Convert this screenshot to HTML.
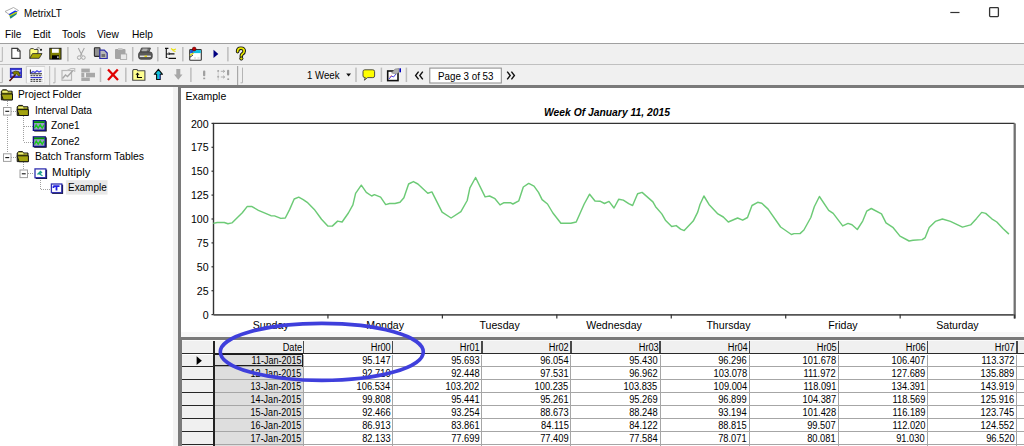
<!DOCTYPE html><html><head><meta charset="utf-8"><style>
html,body{margin:0;padding:0;width:1024px;height:446px;overflow:hidden;background:#fff;position:relative;font-family:"Liberation Sans",sans-serif}
.t{position:absolute;white-space:nowrap;font-family:"Liberation Sans",sans-serif}
svg{position:absolute;overflow:visible}
</style></head><body>
<div style="position:absolute;left:0px;top:0px;width:1024px;height:43px;background:#fff;"></div>
<div class="t" style="left:23.5px;top:7.57px;font-size:11.5px;line-height:11.5px;font-weight:normal;font-style:normal;color:#000;transform:scaleX(0.86);transform-origin:left;">MetrixLT</div>
<div class="t" style="left:5px;top:29.09px;font-size:11px;line-height:11px;font-weight:normal;font-style:normal;color:#000;transform:scaleX(0.92);transform-origin:left;">File</div>
<div class="t" style="left:32.5px;top:29.09px;font-size:11px;line-height:11px;font-weight:normal;font-style:normal;color:#000;transform:scaleX(0.92);transform-origin:left;">Edit</div>
<div class="t" style="left:62px;top:29.09px;font-size:11px;line-height:11px;font-weight:normal;font-style:normal;color:#000;transform:scaleX(0.92);transform-origin:left;">Tools</div>
<div class="t" style="left:97px;top:29.09px;font-size:11px;line-height:11px;font-weight:normal;font-style:normal;color:#000;transform:scaleX(0.92);transform-origin:left;">View</div>
<div class="t" style="left:132px;top:29.09px;font-size:11px;line-height:11px;font-weight:normal;font-style:normal;color:#000;transform:scaleX(0.92);transform-origin:left;">Help</div>
<div style="position:absolute;left:0px;top:43px;width:1024px;height:1px;background:#a0a0a0;"></div>
<div style="position:absolute;left:0px;top:44px;width:1024px;height:20px;background:#f0f0f0;"></div>
<div style="position:absolute;left:0px;top:64px;width:1024px;height:1px;background:#c0c0c0;"></div>
<div style="position:absolute;left:0px;top:65px;width:1024px;height:21px;background:#f0f0f0;"></div>
<div style="position:absolute;left:0px;top:85px;width:1024px;height:2px;background:#7a7a7a;"></div>
<div style="position:absolute;left:0px;top:87px;width:173px;height:359px;background:#fff;"></div>
<div style="position:absolute;left:173px;top:87px;width:5px;height:359px;background:#f3f3f3;"></div>
<div style="position:absolute;left:178px;top:85px;width:846px;height:3px;background:#7a7a7a;"></div>
<div style="position:absolute;left:178px;top:85px;width:3px;height:252px;background:#7a7a7a;"></div>
<div style="position:absolute;left:181px;top:88px;width:843px;height:244px;background:#fff;"></div>
<div style="position:absolute;left:181px;top:332px;width:843px;height:5px;background:#f8f8f8;"></div>
<svg style="left:0;top:0" width="1024" height="446" viewBox="0 0 1024 446"><rect x="67.15" y="47" width="1.5" height="14.4" fill="#bdbdbd"/><rect x="131.95" y="47" width="1.5" height="14.4" fill="#bdbdbd"/><rect x="157.05" y="47" width="1.5" height="14.4" fill="#bdbdbd"/><rect x="182.05" y="47" width="1.5" height="14.4" fill="#bdbdbd"/><rect x="227.15" y="47" width="1.5" height="14.4" fill="#bdbdbd"/><rect x="99.75" y="67.6" width="1.5" height="14.4" fill="#bdbdbd"/><rect x="125.05" y="67.6" width="1.5" height="14.4" fill="#bdbdbd"/><rect x="190.15" y="67.6" width="1.5" height="14.4" fill="#bdbdbd"/><rect x="355.25" y="67.6" width="1.5" height="14.4" fill="#bdbdbd"/><rect x="380.65" y="67.6" width="1.5" height="14.4" fill="#bdbdbd"/><rect x="405.65" y="67.6" width="1.5" height="14.4" fill="#bdbdbd"/><rect x="49" y="66" width="1.2" height="19" fill="#c4c4c4"/><rect x="237" y="66" width="1.2" height="19" fill="#a8a8a8"/><path d="M0 61.4 H2.3 V47" fill="none" stroke="#b4b4b4" stroke-width="1"/><path d="M0 82.6 H2.3 V67.6" fill="none" stroke="#b4b4b4" stroke-width="1"/><path d="M53 82.8 H55 V67.6" fill="none" stroke="#b4b4b4" stroke-width="1"/><path d="M240.5 82.8 H242.5 V67.6" fill="none" stroke="#b4b4b4" stroke-width="1"/><path d="M11.8 48.4 H17.6 L20.1 50.9 V58.4 H11.8 Z" fill="#fff" stroke="#3a3a3a" stroke-width="1.1"/><path d="M17.4 48.4 V51.1 H20.1" fill="none" stroke="#3a3a3a" stroke-width="1"/><path d="M29.8 49.5 L31 48.6 L33.4 48.6 L34.2 49.5 L38 49.5 L38 53 L29.8 58.3 Z" fill="#ffff80" stroke="#303030" stroke-width="0.9"/><path d="M29.8 58.3 L32.5 53.6 L42 53.6 L39.2 58.3 Z" fill="#a8a800" stroke="#303030" stroke-width="0.9"/><circle cx="41" cy="49.8" r="1.1" fill="#202020"/><path d="M36.5 48.6 Q38 46.8 39.8 48.2" fill="none" stroke="#606060" stroke-width="0.8"/><rect x="49.8" y="48.3" width="11.2" height="10.8" fill="#808000" stroke="#1a1a1a" stroke-width="1"/><rect x="52" y="48.8" width="6.8" height="4" fill="#fff"/><rect x="52" y="55.3" width="7" height="3.8" fill="#000"/><rect x="57.3" y="56.3" width="1.2" height="1.8" fill="#fff"/><path d="M78.3 48 L82.2 55.8 M84.3 48 L80.4 55.8" stroke="#a8a8a8" stroke-width="1.1" fill="none"/><circle cx="79.2" cy="57.6" r="1.8" fill="none" stroke="#a8a8a8" stroke-width="1"/><circle cx="83.4" cy="57.6" r="1.8" fill="none" stroke="#a8a8a8" stroke-width="1"/><rect x="94.4" y="47.8" width="5.6" height="8.6" fill="#909090" stroke="#2a2a2a" stroke-width="1.1" rx="0.6"/><path d="M99.8 50.2 H104.3 L107.2 53.1 V58.5 H99.8 Z" fill="#b8b8b8" stroke="#2b2ba8" stroke-width="1.2"/><rect x="101.5" y="54" width="3.6" height="3" fill="#707070"/><rect x="115" y="49" width="10.5" height="10" rx="1" fill="#a4a4a4"/><rect x="118" y="48" width="4.5" height="2" fill="#c8c8c8"/><rect x="120.5" y="54" width="6.2" height="5.5" fill="#e8e8e8" stroke="#a4a4a4" stroke-width="0.8"/><path d="M141.5 48 H150.5 L149 52 H140 Z" fill="#707070" stroke="#404040" stroke-width="0.8"/><path d="M142.5 49.2 H147.5 M141.8 50.8 H146.8" stroke="#e0e0e0" stroke-width="0.8"/><rect x="138.6" y="52" width="13.6" height="7.2" rx="2.2" fill="#5a5a5a" stroke="#3a3a3a" stroke-width="0.8"/><rect x="139.8" y="55.6" width="11" height="1.3" fill="#f0f0f0"/><rect x="144.5" y="55.6" width="2.5" height="1.3" fill="#e0d000"/><path d="M165 48.4 H168.4 M166.3 48.4 V57.5 H167.5 M166.3 54 H168" stroke="#111" stroke-width="1.1" fill="none"/><path d="M168.5 53.8 H174.5 M168.5 58.4 H176 M169 52.4 V55" stroke="#111" stroke-width="1.2" fill="none"/><path d="M171 48.5 L173 50 L176 49 M172.5 50.5 L175.5 51.5" stroke="#e8e000" stroke-width="1.1" fill="none"/><rect x="189.7" y="49.6" width="11.6" height="10.6" rx="0.8" fill="#fff" stroke="#303030" stroke-width="1.1"/><rect x="190.2" y="50.1" width="10.6" height="3" fill="#10c0e0"/><rect x="190.2" y="50.1" width="3" height="3" fill="#2050d0"/><circle cx="194.2" cy="49" r="1.9" fill="#c00000" stroke="#400000" stroke-width="0.5"/><path d="M189.8 55.5 L193.5 53" stroke="#d8d800" stroke-width="1.4"/><path d="M190 57.2 L193 55" stroke="#202020" stroke-width="0.9"/><path d="M194 58 H196 M197.5 58 H199.5" stroke="#c0c0c0" stroke-width="0.8"/><path d="M213.5 49.8 L218.3 53.9 L213.5 58 Z" fill="#000080"/><path d="M237.6 51.6 Q237.6 48.2 240.9 48.2 Q244.2 48.2 244.2 51.1 Q244.2 52.9 242.3 54 Q241.3 54.7 241.3 56.2" fill="none" stroke="#101010" stroke-width="3.6" stroke-linecap="round"/><path d="M237.6 51.6 Q237.6 48.2 240.9 48.2 Q244.2 48.2 244.2 51.1 Q244.2 52.9 242.3 54 Q241.3 54.7 241.3 56.2" fill="none" stroke="#e8e800" stroke-width="1.7" stroke-linecap="round"/><circle cx="241.3" cy="58.5" r="1.6" fill="#e8e800" stroke="#101010" stroke-width="1"/><rect x="10.3" y="68.3" width="11.3" height="9.2" fill="#3838e0" stroke="#2020a0" stroke-width="0.8"/><rect x="11.5" y="70.2" width="9" height="1.4" fill="#e0e8ff"/><rect x="11.5" y="74.2" width="9" height="1.4" fill="#e0e8ff"/><path d="M9.5 81 L15.5 74.5" stroke="#501010" stroke-width="1.6"/><path d="M12.5 72.5 Q15 70 18.5 71.5 L20.5 75.5 L18.5 76 L16.5 73.8 L14.5 75.2 Z" fill="#808000" stroke="#303000" stroke-width="0.6"/><rect x="26.3" y="66.3" width="18.5" height="16.8" fill="#f9f9f9" stroke="#dcdcdc" stroke-width="0.6"/><path d="M26.3 83.1 V66.3 H44.8" fill="none" stroke="#c8c8c8" stroke-width="0.8"/><path d="M30.4 69.5 V73.8 H42" stroke="#222" stroke-width="1" fill="none"/><path d="M31 73 L33 71.5 L35 72.5 L37 70.8 L39 72 L41.5 70.8" stroke="#4040e0" stroke-width="1.3" fill="none"/><path d="M30.5 75.7 H42.2" stroke="#303030" stroke-width="1" stroke-dasharray="2 0.8"/><path d="M30.5 77.6 H42.2" stroke="#3030d0" stroke-width="1.1"/><path d="M30.5 79.6 H42.2 M30.5 81.3 H42.2" stroke="#303030" stroke-width="1" stroke-dasharray="2 0.8"/><rect x="62" y="70.5" width="9.5" height="9.8" fill="none" stroke="#b8b8b8" stroke-width="1.2"/><path d="M62.5 78.5 L65.5 75 L67.5 76.5 L73.5 70" stroke="#a8a8a8" stroke-width="1.4" fill="none"/><path d="M67 70.5 L71 68.5 L74.7 68.5 L74.7 72" stroke="#c0c0c0" stroke-width="1.2" fill="none"/><rect x="81.3" y="68.6" width="8.5" height="3.8" fill="#a8a8a8"/><rect x="81.3" y="72.8" width="3" height="4.5" fill="#a8a8a8"/><rect x="86" y="72.8" width="9" height="4.5" fill="#a8a8a8"/><rect x="81.3" y="77.6" width="8.5" height="3.4" fill="#a8a8a8"/><path d="M108 69.5 L118 80 M117.8 69.5 L108 80" stroke="#e00000" stroke-width="2.3"/><path d="M132.7 70.8 L133.5 69.5 L137 69.5 L137.8 70.8 H144.9 V80.2 H132.7 Z" fill="#ffff90" stroke="#4a4a4a" stroke-width="1.1" stroke-linejoin="round"/><path d="M137.5 74.5 V77.5 H142" stroke="#000" stroke-width="1.2" fill="none"/><path d="M135.5 74.8 L137.5 72.5 L139.5 74.8 Z" fill="#000"/><path d="M158.4 69.3 L162.5 74.3 H160.2 V79.5 H156.6 V74.3 H154.3 Z" fill="#10c0d8" stroke="#0a0a0a" stroke-width="1.1" stroke-linejoin="round"/><path d="M159.8 74.5 V79 " stroke="#4060ff" stroke-width="1"/><path d="M176.3 69 H180.3 V74.5 H182.5 L178.3 79.8 L174 74.5 H176.3 Z" fill="#a8a8a8"/><rect x="203" y="70.4" width="2.3" height="5.8" rx="1" fill="#a0a0a0"/><rect x="203.2" y="77.6" width="2" height="1.6" fill="#a0a0a0"/><circle cx="218.2" cy="71" r="1" fill="#a0a0a0"/><circle cx="218.2" cy="76.8" r="1" fill="#a0a0a0"/><path d="M218.2 71 V80.5" stroke="#c0c0c0" stroke-width="0.6"/><path d="M220.8 71.3 H224.5 M223 70 L224.8 71.3 L223 72.6 M220.8 77 H224.5 M223 75.7 L224.8 77 L223 78.3" stroke="#a0a0a0" stroke-width="0.8" fill="none"/><rect x="227" y="69.8" width="2.2" height="5.8" rx="1" fill="#a0a0a0"/><rect x="227.3" y="78.4" width="1.8" height="1.6" fill="#a0a0a0"/><path d="M346.2 73.4 H351 L348.6 76.4 Z" fill="#111"/><path d="M364.8 69.8 H372.8 Q374.6 69.8 374.6 71.6 V76 Q374.6 77.6 372.8 77.6 H367.5 L364.4 80.2 L365.3 77.6 Q363 77.6 363 76 V71.6 Q363 69.8 364.8 69.8 Z" fill="#ffff00" stroke="#3a3a3a" stroke-width="0.9"/><rect x="387.7" y="71" width="10.3" height="9.6" fill="#fff" stroke="#111" stroke-width="1.6"/><path d="M389 79 L391.5 76 L393.5 77 L396 74" stroke="#3030e0" stroke-width="0.9" fill="none"/><path d="M389.5 77 L392 75.5" stroke="#e04040" stroke-width="0.6"/><path d="M391.5 73 L395 69 L399 68.5 L399 72.5 L396 74 Z" fill="#b0b0b0" stroke="#707070" stroke-width="0.5"/><rect x="399.4" y="68.3" width="1.6" height="4" fill="#0000c0"/><path d="M418.6 71.6 L415.6 75.5 L418.6 79.4 M422.8 71.6 L419.8 75.5 L422.8 79.4" fill="none" stroke="#111" stroke-width="1.4"/><path d="M507.2 71.6 L510.2 75.5 L507.2 79.4 M511.4 71.6 L514.4 75.5 L511.4 79.4" fill="none" stroke="#111" stroke-width="1.4"/><rect x="429.8" y="68.1" width="71.5" height="14.9" fill="#fff" stroke="#8a8a8a" stroke-width="1"/><path d="M950.3 12.5 H959.5" stroke="#333" stroke-width="1.2"/><rect x="989.6" y="7.6" width="8.8" height="9" fill="none" stroke="#333" stroke-width="1.3" rx="0.8"/><path d="M5 11.5 L13.5 7.5 L18.5 10.5 L10 15 Z" fill="#fff" stroke="#999" stroke-width="0.8"/><path d="M8.5 14.3 L15 10.5 Q17 11 17.2 11.8 L10.5 15.3 Q9 15 8.5 14.3 Z" fill="#1030f0"/><path d="M8.8 15.6 L16 11.8 L17.5 12.8 L10.5 16.6 Z" fill="#c8d800"/><path d="M9.5 16.5 L17 12.8 L16.5 14.5 L10.5 18.8 Z" fill="#208878"/><path d="M7.5 101 V153 M11 111.5 H16 M23.5 116 V142 M24 142.5 H33 M24 126.5 H33 M11 157.5 H16 M23.5 162 V169 M28 173.5 H34 M40.5 178 V189 M41 189.5 H51" fill="none" stroke="#a0a0a0" stroke-width="1" stroke-dasharray="1 1"/><path d="M1.3 91.2 L2.8 89.8 L6.6 89.8 L7.8 91.2 L12.100000000000001 91.2 L12.100000000000001 99.8 L1.3 99.8 Z" fill="#707000" stroke="#141414" stroke-width="1"/><path d="M2.3 90.8 H7.3 L7.8999999999999995 92.8 H2.3 Z" fill="#f0f080"/><path d="M8.3 92.2 H11.3" stroke="#c8c860" stroke-width="0.9"/><path d="M1.1 94.0 L12.5 94.0 L12.5 99.9 L3.3 99.9 Z" fill="#a4a410" stroke="#141414" stroke-width="1"/><rect x="3.5" y="107.5" width="7.5" height="7.6" fill="#fff" stroke="#a0a0a0" stroke-width="1"/><path d="M5.3 111.3 H9.2" stroke="#111" stroke-width="1.1"/><path d="M17.2 106.8 L18.7 105.39999999999999 L22.5 105.39999999999999 L23.7 106.8 L28.0 106.8 L28.0 115.39999999999999 L17.2 115.39999999999999 Z" fill="#707000" stroke="#141414" stroke-width="1"/><path d="M18.2 106.39999999999999 H23.2 L23.799999999999997 108.39999999999999 H18.2 Z" fill="#f0f080"/><path d="M24.2 107.8 H27.2" stroke="#c8c860" stroke-width="0.9"/><path d="M17.0 109.6 L28.4 109.6 L28.4 115.5 L19.2 115.5 Z" fill="#a4a410" stroke="#141414" stroke-width="1"/><rect x="34.2" y="121.2" width="12.5" height="10.3" fill="#000"/><rect x="33.400000000000006" y="120.7" width="11.8" height="9.6" fill="#9a9ac8" stroke="#101080" stroke-width="1.4"/><rect x="34.0" y="121.3" width="10.6" height="1.7" fill="#009a00"/><path d="M34.5 128.3 L36.2 124.8 L38.2 128.0 L40.2 124.8 L42.2 128.0 L44.2 124.8" stroke="#18c818" stroke-width="1.3" fill="none"/><rect x="34.2" y="137.39999999999998" width="12.5" height="10.3" fill="#000"/><rect x="33.400000000000006" y="136.89999999999998" width="11.8" height="9.6" fill="#9a9ac8" stroke="#101080" stroke-width="1.4"/><rect x="34.0" y="137.5" width="10.6" height="1.7" fill="#009a00"/><path d="M34.5 144.5 L36.2 141.0 L38.2 144.2 L40.2 141.0 L42.2 144.2 L44.2 141.0" stroke="#18c818" stroke-width="1.3" fill="none"/><rect x="3.5" y="153.8" width="7.5" height="7.6" fill="#fff" stroke="#a0a0a0" stroke-width="1"/><path d="M5.3 157.60000000000002 H9.2" stroke="#111" stroke-width="1.1"/><path d="M17.2 153.0 L18.7 151.6 L22.5 151.6 L23.7 153.0 L28.0 153.0 L28.0 161.6 L17.2 161.6 Z" fill="#707000" stroke="#141414" stroke-width="1"/><path d="M18.2 152.6 H23.2 L23.799999999999997 154.6 H18.2 Z" fill="#f0f080"/><path d="M24.2 154.0 H27.2" stroke="#c8c860" stroke-width="0.9"/><path d="M17.0 155.8 L28.4 155.8 L28.4 161.7 L19.2 161.7 Z" fill="#a4a410" stroke="#141414" stroke-width="1"/><rect x="20.0" y="170.0" width="7.5" height="7.6" fill="#fff" stroke="#a0a0a0" stroke-width="1"/><path d="M21.8 173.8 H25.7" stroke="#111" stroke-width="1.1"/><rect x="35.699999999999996" y="169.60000000000002" width="11.4" height="9.4" fill="#101030"/><rect x="35.0" y="168.9" width="10.8" height="8.8" fill="#fff" stroke="#3030b0" stroke-width="1.3"/><path d="M37.5 174.5 L40.5 171.5 L41.5 172.5 L39.5 174 L42.5 175.8" stroke="#20a090" stroke-width="1.3" fill="none"/><rect x="65.9" y="180.2" width="41.6" height="14.4" fill="#e8e8e8"/><rect x="52.099999999999994" y="184.70000000000002" width="11" height="9.2" fill="#101030"/><rect x="51.4" y="184.0" width="10.4" height="8.6" fill="#fff" stroke="#3030b0" stroke-width="1.3"/><path d="M53.3 186.2 H59.5 M56.5 186.2 V190.5 M53.5 186.2 V188" stroke="#2020e0" stroke-width="1.8" fill="none"/></svg>
<div class="t" style="left:18.4px;top:89.98px;font-size:10.3px;line-height:10.3px;font-weight:normal;font-style:normal;color:#000;transform:scaleX(0.99);transform-origin:left;">Project Folder</div>
<div class="t" style="left:35px;top:105.56px;font-size:10.3px;line-height:10.3px;font-weight:normal;font-style:normal;color:#000;transform:scaleX(0.975);transform-origin:left;">Interval Data</div>
<div class="t" style="left:51px;top:121.14px;font-size:10.3px;line-height:10.3px;font-weight:normal;font-style:normal;color:#000;transform:scaleX(0.985);transform-origin:left;">Zone1</div>
<div class="t" style="left:51px;top:136.72px;font-size:10.3px;line-height:10.3px;font-weight:normal;font-style:normal;color:#000;transform:scaleX(0.985);transform-origin:left;">Zone2</div>
<div class="t" style="left:34.8px;top:152.30px;font-size:10.3px;line-height:10.3px;font-weight:normal;font-style:normal;color:#000;transform:scaleX(1.01);transform-origin:left;">Batch Transform Tables</div>
<div class="t" style="left:51.5px;top:167.88px;font-size:10.3px;line-height:10.3px;font-weight:normal;font-style:normal;color:#000;transform:scaleX(1.1);transform-origin:left;">Multiply</div>
<div class="t" style="left:67.8px;top:183.46px;font-size:10.3px;line-height:10.3px;font-weight:normal;font-style:normal;color:#000;transform:scaleX(0.965);transform-origin:left;">Example</div>
<div class="t" style="left:307.1px;top:70.41px;font-size:10.5px;line-height:10.5px;font-weight:normal;font-style:normal;color:#000;transform:scaleX(0.92);transform-origin:left;">1 Week</div>
<div class="t" style="left:438px;top:72.28px;font-size:10.3px;line-height:10.3px;font-weight:normal;font-style:normal;color:#000;transform:scaleX(0.95);transform-origin:left;">Page 3 of 53</div>
<div class="t" style="left:185.4px;top:91.11px;font-size:10.5px;line-height:10.5px;font-weight:normal;font-style:normal;color:#000;">Example</div>
<div class="t" style="left:544px;top:107.13px;font-size:10.6px;line-height:10.6px;font-weight:bold;font-style:italic;color:#000;transform:scaleX(0.975);transform-origin:left;">Week Of January 11, 2015</div>
<svg style="left:0;top:0" width="1024" height="446" viewBox="0 0 1024 446"><path d="M213.5 314.8 V123.4 H1014.6" fill="none" stroke="#333" stroke-width="1.4"/><path d="M213.5 314.9 H1014.6" fill="none" stroke="#555" stroke-width="1.7"/><path d="M1014.7 123.4 V318.5" stroke="#707070" stroke-width="2.3"/><path d="M211.5 123.40 H213.5" stroke="#333" stroke-width="1.2"/><path d="M211.5 147.30 H213.5" stroke="#333" stroke-width="1.2"/><path d="M211.5 171.20 H213.5" stroke="#333" stroke-width="1.2"/><path d="M211.5 195.10 H213.5" stroke="#333" stroke-width="1.2"/><path d="M211.5 219.00 H213.5" stroke="#333" stroke-width="1.2"/><path d="M211.5 242.90 H213.5" stroke="#333" stroke-width="1.2"/><path d="M211.5 266.80 H213.5" stroke="#333" stroke-width="1.2"/><path d="M211.5 290.70 H213.5" stroke="#333" stroke-width="1.2"/><path d="M211.5 314.60 H213.5" stroke="#333" stroke-width="1.2"/><path d="M327.94 314.6 V318.5" stroke="#333" stroke-width="1.2"/><path d="M442.39 314.6 V318.5" stroke="#333" stroke-width="1.2"/><path d="M556.83 314.6 V318.5" stroke="#333" stroke-width="1.2"/><path d="M671.27 314.6 V318.5" stroke="#333" stroke-width="1.2"/><path d="M785.71 314.6 V318.5" stroke="#333" stroke-width="1.2"/><path d="M900.16 314.6 V318.5" stroke="#333" stroke-width="1.2"/><path d="M1014.60 314.6 V318.5" stroke="#333" stroke-width="1.2"/><path d="M213.2 223.4 L217.2 222.5 L224.3 222.5 L227.9 223.8 L231.9 222.9 L242.3 212.7 L247.3 206.4 L251.6 206.4 L258.4 210.3 L263.8 212.7 L270.9 215.7 L274.5 215.9 L280.8 218.4 L285.3 218.0 L289.7 209.4 L294.2 199.0 L298.7 197.2 L303.2 199.6 L307.2 202.3 L314.3 209.4 L321.5 219.3 L327.8 226.1 L332.3 226.1 L337.6 221.1 L342.1 222.0 L348.4 213.0 L352.9 204.9 L355.6 193.3 L361.3 185.2 L366.3 192.4 L371.7 196.0 L374.4 194.7 L380.6 197.2 L385.7 204.6 L389.6 203.5 L395.0 203.5 L400.0 202.3 L403.9 197.8 L408.6 184.0 L413.4 181.6 L417.9 184.0 L427.8 193.3 L431.9 191.9 L442.1 212.1 L451.1 218.0 L460.9 211.6 L467.2 200.5 L469.9 187.9 L475.6 177.5 L485.1 196.9 L489.6 196.0 L495.0 198.7 L500.0 204.9 L503.6 202.8 L510.8 202.8 L512.9 204.0 L518.8 200.8 L523.3 187.0 L528.7 183.4 L534.0 186.1 L538.5 192.4 L542.1 199.6 L547.5 204.0 L552.9 213.0 L560.9 223.2 L570.8 223.2 L576.2 222.0 L584.2 204.0 L589.6 194.2 L595.0 201.0 L600.0 201.2 L604.5 203.5 L609.0 201.4 L614.0 208.0 L618.8 199.2 L623.3 200.1 L628.7 203.7 L632.6 205.5 L637.6 193.7 L642.1 192.4 L652.9 201.9 L655.6 206.7 L661.8 213.9 L665.4 220.2 L671.7 226.5 L676.2 225.6 L680.6 229.1 L684.2 230.6 L693.2 221.1 L697.7 212.1 L700.0 204.5 L703.9 196.0 L709.0 204.4 L717.9 213.9 L723.3 217.0 L728.3 222.0 L737.6 218.0 L742.7 220.2 L747.5 217.5 L752.0 205.5 L757.7 202.3 L761.8 203.2 L768.1 209.1 L780.6 227.0 L791.4 234.5 L794.1 233.6 L800.0 233.6 L803.9 230.0 L810.8 217.5 L814.3 206.7 L819.4 196.5 L828.7 210.3 L833.2 213.4 L842.7 225.9 L848.0 223.4 L852.0 224.7 L857.3 229.5 L862.7 221.1 L866.7 211.2 L871.3 208.5 L881.5 213.9 L886.0 222.9 L893.2 227.7 L900.0 236.1 L909.1 241.0 L913.1 240.2 L922.2 239.6 L925.2 237.6 L929.2 227.5 L935.3 221.4 L942.4 219.0 L950.4 221.4 L962.5 227.1 L970.6 224.9 L976.6 218.4 L981.7 212.4 L985.7 213.4 L991.8 218.8 L996.8 222.0 L1002.9 228.5 L1008.9 234.1" fill="none" stroke="#6cca76" stroke-width="1.45" stroke-linejoin="round"/></svg>
<div class="t" style="right:815.4px;top:118.53px;font-size:10.6px;line-height:10.6px;font-weight:normal;font-style:normal;color:#000;">200</div>
<div class="t" style="right:815.4px;top:142.43px;font-size:10.6px;line-height:10.6px;font-weight:normal;font-style:normal;color:#000;">175</div>
<div class="t" style="right:815.4px;top:166.33px;font-size:10.6px;line-height:10.6px;font-weight:normal;font-style:normal;color:#000;">150</div>
<div class="t" style="right:815.4px;top:190.23px;font-size:10.6px;line-height:10.6px;font-weight:normal;font-style:normal;color:#000;">125</div>
<div class="t" style="right:815.4px;top:214.13px;font-size:10.6px;line-height:10.6px;font-weight:normal;font-style:normal;color:#000;">100</div>
<div class="t" style="right:815.4px;top:238.03px;font-size:10.6px;line-height:10.6px;font-weight:normal;font-style:normal;color:#000;">75</div>
<div class="t" style="right:815.4px;top:261.93px;font-size:10.6px;line-height:10.6px;font-weight:normal;font-style:normal;color:#000;">50</div>
<div class="t" style="right:815.4px;top:285.83px;font-size:10.6px;line-height:10.6px;font-weight:normal;font-style:normal;color:#000;">25</div>
<div class="t" style="right:815.4px;top:309.73px;font-size:10.6px;line-height:10.6px;font-weight:normal;font-style:normal;color:#000;">0</div>
<div class="t" style="left:270.7214285714286px;top:320.43px;font-size:10.6px;line-height:10.6px;font-weight:normal;font-style:normal;color:#000;transform:translateX(-50%) scaleX(1.0);">Sunday</div>
<div class="t" style="left:385.1642857142857px;top:320.43px;font-size:10.6px;line-height:10.6px;font-weight:normal;font-style:normal;color:#000;transform:translateX(-50%) scaleX(1.0);">Monday</div>
<div class="t" style="left:499.60714285714283px;top:320.43px;font-size:10.6px;line-height:10.6px;font-weight:normal;font-style:normal;color:#000;transform:translateX(-50%) scaleX(1.0);">Tuesday</div>
<div class="t" style="left:614.05px;top:320.43px;font-size:10.6px;line-height:10.6px;font-weight:normal;font-style:normal;color:#000;transform:translateX(-50%) scaleX(1.0);">Wednesday</div>
<div class="t" style="left:728.4928571428571px;top:320.43px;font-size:10.6px;line-height:10.6px;font-weight:normal;font-style:normal;color:#000;transform:translateX(-50%) scaleX(1.0);">Thursday</div>
<div class="t" style="left:842.9357142857143px;top:320.43px;font-size:10.6px;line-height:10.6px;font-weight:normal;font-style:normal;color:#000;transform:translateX(-50%) scaleX(1.0);">Friday</div>
<div class="t" style="left:957.3785714285715px;top:320.43px;font-size:10.6px;line-height:10.6px;font-weight:normal;font-style:normal;color:#000;transform:translateX(-50%) scaleX(1.0);">Saturday</div>
<div style="position:absolute;left:178px;top:337px;width:846px;height:3px;background:#7a7a7a;"></div>
<div style="position:absolute;left:178px;top:337px;width:4px;height:109px;background:#7a7a7a;"></div>
<div style="position:absolute;left:182px;top:340px;width:842px;height:1px;background:#fafafa;"></div>
<div style="position:absolute;left:182px;top:341px;width:842px;height:12px;background:#f0f0f0;"></div>
<div style="position:absolute;left:182px;top:352.5px;width:842px;height:1.8px;background:#2a2a2a;"></div>
<div style="position:absolute;left:215px;top:355px;width:809px;height:91px;background:#fff;"></div>
<div style="position:absolute;left:215px;top:355px;width:88px;height:91px;background:#dedede;"></div>
<div style="position:absolute;left:182px;top:355px;width:32px;height:91px;background:#f0f0f0;"></div>
<div style="position:absolute;left:213.1px;top:341px;width:1.7px;height:105px;background:#222;"></div>
<div style="position:absolute;left:182px;top:366px;width:32px;height:1.3px;background:#262626;"></div>
<div style="position:absolute;left:215px;top:366px;width:809px;height:1px;background:#a6a6a6;"></div>
<div style="position:absolute;left:182px;top:379px;width:32px;height:1.3px;background:#262626;"></div>
<div style="position:absolute;left:215px;top:379px;width:809px;height:1px;background:#a6a6a6;"></div>
<div style="position:absolute;left:182px;top:392px;width:32px;height:1.3px;background:#262626;"></div>
<div style="position:absolute;left:215px;top:392px;width:809px;height:1px;background:#a6a6a6;"></div>
<div style="position:absolute;left:182px;top:405px;width:32px;height:1.3px;background:#262626;"></div>
<div style="position:absolute;left:215px;top:405px;width:809px;height:1px;background:#a6a6a6;"></div>
<div style="position:absolute;left:182px;top:418px;width:32px;height:1.3px;background:#262626;"></div>
<div style="position:absolute;left:215px;top:418px;width:809px;height:1px;background:#a6a6a6;"></div>
<div style="position:absolute;left:182px;top:431px;width:32px;height:1.3px;background:#262626;"></div>
<div style="position:absolute;left:215px;top:431px;width:809px;height:1px;background:#a6a6a6;"></div>
<div style="position:absolute;left:182px;top:444px;width:32px;height:1.3px;background:#262626;"></div>
<div style="position:absolute;left:215px;top:444px;width:809px;height:1px;background:#a6a6a6;"></div>
<div style="position:absolute;left:302.8px;top:341px;width:1.5px;height:12px;background:#4a4a4a;"></div>
<div style="position:absolute;left:303.0px;top:355px;width:1px;height:91px;background:#a6a6a6;"></div>
<div style="position:absolute;left:391.95px;top:341px;width:1.5px;height:12px;background:#4a4a4a;"></div>
<div style="position:absolute;left:392.15px;top:355px;width:1px;height:91px;background:#a6a6a6;"></div>
<div style="position:absolute;left:481.1px;top:341px;width:1.5px;height:12px;background:#4a4a4a;"></div>
<div style="position:absolute;left:481.3px;top:355px;width:1px;height:91px;background:#a6a6a6;"></div>
<div style="position:absolute;left:570.25px;top:341px;width:1.5px;height:12px;background:#4a4a4a;"></div>
<div style="position:absolute;left:570.45px;top:355px;width:1px;height:91px;background:#a6a6a6;"></div>
<div style="position:absolute;left:659.4px;top:341px;width:1.5px;height:12px;background:#4a4a4a;"></div>
<div style="position:absolute;left:659.6px;top:355px;width:1px;height:91px;background:#a6a6a6;"></div>
<div style="position:absolute;left:748.55px;top:341px;width:1.5px;height:12px;background:#4a4a4a;"></div>
<div style="position:absolute;left:748.75px;top:355px;width:1px;height:91px;background:#a6a6a6;"></div>
<div style="position:absolute;left:837.7px;top:341px;width:1.5px;height:12px;background:#4a4a4a;"></div>
<div style="position:absolute;left:837.9000000000001px;top:355px;width:1px;height:91px;background:#a6a6a6;"></div>
<div style="position:absolute;left:926.85px;top:341px;width:1.5px;height:12px;background:#4a4a4a;"></div>
<div style="position:absolute;left:927.0500000000001px;top:355px;width:1px;height:91px;background:#a6a6a6;"></div>
<div style="position:absolute;left:1016.0px;top:341px;width:1.5px;height:12px;background:#4a4a4a;"></div>
<div style="position:absolute;left:1016.2px;top:355px;width:1px;height:91px;background:#a6a6a6;"></div>
<div style="position:absolute;left:215px;top:353px;width:88px;height:2px;background:#1e1e1e;"></div>
<div style="position:absolute;left:301.6px;top:353px;width:1.4px;height:13.5px;background:#1e1e1e;"></div>
<div style="position:absolute;left:215px;top:365px;width:88px;height:1.4px;background:#1e1e1e;"></div>
<svg style="left:0;top:0" width="1024" height="446"><path d="M196.6 356.3 L201.9 360.7 L196.6 365.1 Z" fill="#000"/></svg>
<div class="t" style="right:722.3px;top:342.84px;font-size:10px;line-height:10px;font-weight:normal;font-style:normal;color:#000;transform:scaleX(0.92);transform-origin:right;">Date</div>
<div class="t" style="right:633.1500000000001px;top:342.84px;font-size:10px;line-height:10px;font-weight:normal;font-style:normal;color:#000;transform:scaleX(0.92);transform-origin:right;">Hr00</div>
<div class="t" style="right:544.0px;top:342.84px;font-size:10px;line-height:10px;font-weight:normal;font-style:normal;color:#000;transform:scaleX(0.92);transform-origin:right;">Hr01</div>
<div class="t" style="right:454.8499999999999px;top:342.84px;font-size:10px;line-height:10px;font-weight:normal;font-style:normal;color:#000;transform:scaleX(0.92);transform-origin:right;">Hr02</div>
<div class="t" style="right:365.69999999999993px;top:342.84px;font-size:10px;line-height:10px;font-weight:normal;font-style:normal;color:#000;transform:scaleX(0.92);transform-origin:right;">Hr03</div>
<div class="t" style="right:276.54999999999995px;top:342.84px;font-size:10px;line-height:10px;font-weight:normal;font-style:normal;color:#000;transform:scaleX(0.92);transform-origin:right;">Hr04</div>
<div class="t" style="right:187.39999999999986px;top:342.84px;font-size:10px;line-height:10px;font-weight:normal;font-style:normal;color:#000;transform:scaleX(0.92);transform-origin:right;">Hr05</div>
<div class="t" style="right:98.24999999999989px;top:342.84px;font-size:10px;line-height:10px;font-weight:normal;font-style:normal;color:#000;transform:scaleX(0.92);transform-origin:right;">Hr06</div>
<div class="t" style="right:9.099999999999909px;top:342.84px;font-size:10px;line-height:10px;font-weight:normal;font-style:normal;color:#000;transform:scaleX(0.92);transform-origin:right;">Hr07</div>
<div class="t" style="right:723.0px;top:355.64px;font-size:10px;line-height:10px;font-weight:normal;font-style:normal;color:#000;transform:scaleX(0.9);transform-origin:right;">11-Jan-2015</div>
<div class="t" style="right:633.85px;top:355.64px;font-size:10px;line-height:10px;font-weight:normal;font-style:normal;color:#000;transform:scaleX(0.93);transform-origin:right;">95.147</div>
<div class="t" style="right:544.7px;top:355.64px;font-size:10px;line-height:10px;font-weight:normal;font-style:normal;color:#000;transform:scaleX(0.93);transform-origin:right;">95.693</div>
<div class="t" style="right:455.54999999999995px;top:355.64px;font-size:10px;line-height:10px;font-weight:normal;font-style:normal;color:#000;transform:scaleX(0.93);transform-origin:right;">96.054</div>
<div class="t" style="right:366.4px;top:355.64px;font-size:10px;line-height:10px;font-weight:normal;font-style:normal;color:#000;transform:scaleX(0.93);transform-origin:right;">95.430</div>
<div class="t" style="right:277.25px;top:355.64px;font-size:10px;line-height:10px;font-weight:normal;font-style:normal;color:#000;transform:scaleX(0.93);transform-origin:right;">96.296</div>
<div class="t" style="right:188.0999999999999px;top:355.64px;font-size:10px;line-height:10px;font-weight:normal;font-style:normal;color:#000;transform:scaleX(0.93);transform-origin:right;">101.678</div>
<div class="t" style="right:98.94999999999993px;top:355.64px;font-size:10px;line-height:10px;font-weight:normal;font-style:normal;color:#000;transform:scaleX(0.93);transform-origin:right;">106.407</div>
<div class="t" style="right:9.799999999999955px;top:355.64px;font-size:10px;line-height:10px;font-weight:normal;font-style:normal;color:#000;transform:scaleX(0.93);transform-origin:right;">113.372</div>
<div class="t" style="right:723.0px;top:368.64px;font-size:10px;line-height:10px;font-weight:normal;font-style:normal;color:#000;transform:scaleX(0.9);transform-origin:right;">12-Jan-2015</div>
<div class="t" style="right:633.85px;top:368.64px;font-size:10px;line-height:10px;font-weight:normal;font-style:normal;color:#000;transform:scaleX(0.93);transform-origin:right;">92.710</div>
<div class="t" style="right:544.7px;top:368.64px;font-size:10px;line-height:10px;font-weight:normal;font-style:normal;color:#000;transform:scaleX(0.93);transform-origin:right;">92.448</div>
<div class="t" style="right:455.54999999999995px;top:368.64px;font-size:10px;line-height:10px;font-weight:normal;font-style:normal;color:#000;transform:scaleX(0.93);transform-origin:right;">97.531</div>
<div class="t" style="right:366.4px;top:368.64px;font-size:10px;line-height:10px;font-weight:normal;font-style:normal;color:#000;transform:scaleX(0.93);transform-origin:right;">96.962</div>
<div class="t" style="right:277.25px;top:368.64px;font-size:10px;line-height:10px;font-weight:normal;font-style:normal;color:#000;transform:scaleX(0.93);transform-origin:right;">103.078</div>
<div class="t" style="right:188.0999999999999px;top:368.64px;font-size:10px;line-height:10px;font-weight:normal;font-style:normal;color:#000;transform:scaleX(0.93);transform-origin:right;">111.972</div>
<div class="t" style="right:98.94999999999993px;top:368.64px;font-size:10px;line-height:10px;font-weight:normal;font-style:normal;color:#000;transform:scaleX(0.93);transform-origin:right;">127.689</div>
<div class="t" style="right:9.799999999999955px;top:368.64px;font-size:10px;line-height:10px;font-weight:normal;font-style:normal;color:#000;transform:scaleX(0.93);transform-origin:right;">135.889</div>
<div class="t" style="right:723.0px;top:381.64px;font-size:10px;line-height:10px;font-weight:normal;font-style:normal;color:#000;transform:scaleX(0.9);transform-origin:right;">13-Jan-2015</div>
<div class="t" style="right:633.85px;top:381.64px;font-size:10px;line-height:10px;font-weight:normal;font-style:normal;color:#000;transform:scaleX(0.93);transform-origin:right;">106.534</div>
<div class="t" style="right:544.7px;top:381.64px;font-size:10px;line-height:10px;font-weight:normal;font-style:normal;color:#000;transform:scaleX(0.93);transform-origin:right;">103.202</div>
<div class="t" style="right:455.54999999999995px;top:381.64px;font-size:10px;line-height:10px;font-weight:normal;font-style:normal;color:#000;transform:scaleX(0.93);transform-origin:right;">100.235</div>
<div class="t" style="right:366.4px;top:381.64px;font-size:10px;line-height:10px;font-weight:normal;font-style:normal;color:#000;transform:scaleX(0.93);transform-origin:right;">103.835</div>
<div class="t" style="right:277.25px;top:381.64px;font-size:10px;line-height:10px;font-weight:normal;font-style:normal;color:#000;transform:scaleX(0.93);transform-origin:right;">109.004</div>
<div class="t" style="right:188.0999999999999px;top:381.64px;font-size:10px;line-height:10px;font-weight:normal;font-style:normal;color:#000;transform:scaleX(0.93);transform-origin:right;">118.091</div>
<div class="t" style="right:98.94999999999993px;top:381.64px;font-size:10px;line-height:10px;font-weight:normal;font-style:normal;color:#000;transform:scaleX(0.93);transform-origin:right;">134.391</div>
<div class="t" style="right:9.799999999999955px;top:381.64px;font-size:10px;line-height:10px;font-weight:normal;font-style:normal;color:#000;transform:scaleX(0.93);transform-origin:right;">143.919</div>
<div class="t" style="right:723.0px;top:394.64px;font-size:10px;line-height:10px;font-weight:normal;font-style:normal;color:#000;transform:scaleX(0.9);transform-origin:right;">14-Jan-2015</div>
<div class="t" style="right:633.85px;top:394.64px;font-size:10px;line-height:10px;font-weight:normal;font-style:normal;color:#000;transform:scaleX(0.93);transform-origin:right;">99.808</div>
<div class="t" style="right:544.7px;top:394.64px;font-size:10px;line-height:10px;font-weight:normal;font-style:normal;color:#000;transform:scaleX(0.93);transform-origin:right;">95.441</div>
<div class="t" style="right:455.54999999999995px;top:394.64px;font-size:10px;line-height:10px;font-weight:normal;font-style:normal;color:#000;transform:scaleX(0.93);transform-origin:right;">95.261</div>
<div class="t" style="right:366.4px;top:394.64px;font-size:10px;line-height:10px;font-weight:normal;font-style:normal;color:#000;transform:scaleX(0.93);transform-origin:right;">95.269</div>
<div class="t" style="right:277.25px;top:394.64px;font-size:10px;line-height:10px;font-weight:normal;font-style:normal;color:#000;transform:scaleX(0.93);transform-origin:right;">96.899</div>
<div class="t" style="right:188.0999999999999px;top:394.64px;font-size:10px;line-height:10px;font-weight:normal;font-style:normal;color:#000;transform:scaleX(0.93);transform-origin:right;">104.387</div>
<div class="t" style="right:98.94999999999993px;top:394.64px;font-size:10px;line-height:10px;font-weight:normal;font-style:normal;color:#000;transform:scaleX(0.93);transform-origin:right;">118.569</div>
<div class="t" style="right:9.799999999999955px;top:394.64px;font-size:10px;line-height:10px;font-weight:normal;font-style:normal;color:#000;transform:scaleX(0.93);transform-origin:right;">125.916</div>
<div class="t" style="right:723.0px;top:407.64px;font-size:10px;line-height:10px;font-weight:normal;font-style:normal;color:#000;transform:scaleX(0.9);transform-origin:right;">15-Jan-2015</div>
<div class="t" style="right:633.85px;top:407.64px;font-size:10px;line-height:10px;font-weight:normal;font-style:normal;color:#000;transform:scaleX(0.93);transform-origin:right;">92.466</div>
<div class="t" style="right:544.7px;top:407.64px;font-size:10px;line-height:10px;font-weight:normal;font-style:normal;color:#000;transform:scaleX(0.93);transform-origin:right;">93.254</div>
<div class="t" style="right:455.54999999999995px;top:407.64px;font-size:10px;line-height:10px;font-weight:normal;font-style:normal;color:#000;transform:scaleX(0.93);transform-origin:right;">88.673</div>
<div class="t" style="right:366.4px;top:407.64px;font-size:10px;line-height:10px;font-weight:normal;font-style:normal;color:#000;transform:scaleX(0.93);transform-origin:right;">88.248</div>
<div class="t" style="right:277.25px;top:407.64px;font-size:10px;line-height:10px;font-weight:normal;font-style:normal;color:#000;transform:scaleX(0.93);transform-origin:right;">93.194</div>
<div class="t" style="right:188.0999999999999px;top:407.64px;font-size:10px;line-height:10px;font-weight:normal;font-style:normal;color:#000;transform:scaleX(0.93);transform-origin:right;">101.428</div>
<div class="t" style="right:98.94999999999993px;top:407.64px;font-size:10px;line-height:10px;font-weight:normal;font-style:normal;color:#000;transform:scaleX(0.93);transform-origin:right;">116.189</div>
<div class="t" style="right:9.799999999999955px;top:407.64px;font-size:10px;line-height:10px;font-weight:normal;font-style:normal;color:#000;transform:scaleX(0.93);transform-origin:right;">123.745</div>
<div class="t" style="right:723.0px;top:420.64px;font-size:10px;line-height:10px;font-weight:normal;font-style:normal;color:#000;transform:scaleX(0.9);transform-origin:right;">16-Jan-2015</div>
<div class="t" style="right:633.85px;top:420.64px;font-size:10px;line-height:10px;font-weight:normal;font-style:normal;color:#000;transform:scaleX(0.93);transform-origin:right;">86.913</div>
<div class="t" style="right:544.7px;top:420.64px;font-size:10px;line-height:10px;font-weight:normal;font-style:normal;color:#000;transform:scaleX(0.93);transform-origin:right;">83.861</div>
<div class="t" style="right:455.54999999999995px;top:420.64px;font-size:10px;line-height:10px;font-weight:normal;font-style:normal;color:#000;transform:scaleX(0.93);transform-origin:right;">84.115</div>
<div class="t" style="right:366.4px;top:420.64px;font-size:10px;line-height:10px;font-weight:normal;font-style:normal;color:#000;transform:scaleX(0.93);transform-origin:right;">84.122</div>
<div class="t" style="right:277.25px;top:420.64px;font-size:10px;line-height:10px;font-weight:normal;font-style:normal;color:#000;transform:scaleX(0.93);transform-origin:right;">88.815</div>
<div class="t" style="right:188.0999999999999px;top:420.64px;font-size:10px;line-height:10px;font-weight:normal;font-style:normal;color:#000;transform:scaleX(0.93);transform-origin:right;">99.507</div>
<div class="t" style="right:98.94999999999993px;top:420.64px;font-size:10px;line-height:10px;font-weight:normal;font-style:normal;color:#000;transform:scaleX(0.93);transform-origin:right;">112.020</div>
<div class="t" style="right:9.799999999999955px;top:420.64px;font-size:10px;line-height:10px;font-weight:normal;font-style:normal;color:#000;transform:scaleX(0.93);transform-origin:right;">124.552</div>
<div class="t" style="right:723.0px;top:433.64px;font-size:10px;line-height:10px;font-weight:normal;font-style:normal;color:#000;transform:scaleX(0.9);transform-origin:right;">17-Jan-2015</div>
<div class="t" style="right:633.85px;top:433.64px;font-size:10px;line-height:10px;font-weight:normal;font-style:normal;color:#000;transform:scaleX(0.93);transform-origin:right;">82.133</div>
<div class="t" style="right:544.7px;top:433.64px;font-size:10px;line-height:10px;font-weight:normal;font-style:normal;color:#000;transform:scaleX(0.93);transform-origin:right;">77.699</div>
<div class="t" style="right:455.54999999999995px;top:433.64px;font-size:10px;line-height:10px;font-weight:normal;font-style:normal;color:#000;transform:scaleX(0.93);transform-origin:right;">77.409</div>
<div class="t" style="right:366.4px;top:433.64px;font-size:10px;line-height:10px;font-weight:normal;font-style:normal;color:#000;transform:scaleX(0.93);transform-origin:right;">77.584</div>
<div class="t" style="right:277.25px;top:433.64px;font-size:10px;line-height:10px;font-weight:normal;font-style:normal;color:#000;transform:scaleX(0.93);transform-origin:right;">78.071</div>
<div class="t" style="right:188.0999999999999px;top:433.64px;font-size:10px;line-height:10px;font-weight:normal;font-style:normal;color:#000;transform:scaleX(0.93);transform-origin:right;">80.081</div>
<div class="t" style="right:98.94999999999993px;top:433.64px;font-size:10px;line-height:10px;font-weight:normal;font-style:normal;color:#000;transform:scaleX(0.93);transform-origin:right;">91.030</div>
<div class="t" style="right:9.799999999999955px;top:433.64px;font-size:10px;line-height:10px;font-weight:normal;font-style:normal;color:#000;transform:scaleX(0.93);transform-origin:right;">96.520</div>
<svg style="left:0;top:0" width="1024" height="446"><ellipse cx="321.8" cy="351.9" rx="101.5" ry="28.5" fill="none" stroke="#3f3fdc" stroke-width="3.6"/></svg>
</body></html>
